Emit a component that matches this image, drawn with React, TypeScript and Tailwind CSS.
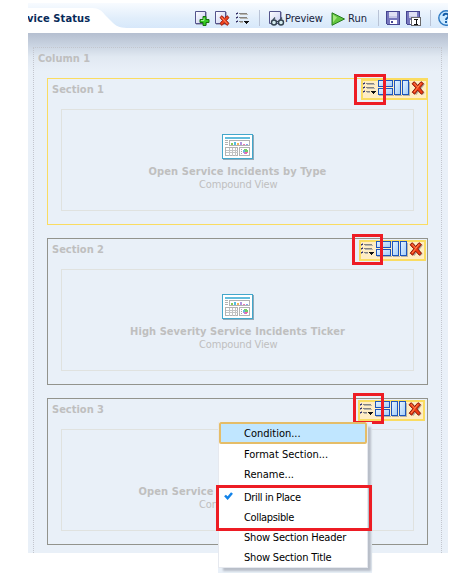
import React from "react";

const Separator = ({ className }: { className: string }) => (
  <span className={`h-4 w-px shrink-0 bg-[#b9c3d6] ${className}`} />
);

const Cross = ({ className }: { className?: string }) => (
  <svg viewBox="0 0 14 14" className={className}>
    <path d="M2.2 11.9 5.2 7.5 1.5 3 4 .9 7.2 4.5 10.8.8 13 2.6 9.5 7.3l3.3 4-2.4 2.2-3.2-3.7-2.7 3.4z" fill="#b5ad9c" transform="translate(.8 .7)" />
    <path d="M1.2 11.2 4.8 6.8 1 2.7 3.3.7 6.6 4.5 10 .7l2.5 1.9-3.7 4.3 3.7 4.4-2.2 1.9-3.6-4-3.1 4z" fill="#ee3b13" stroke="#8b1a0a" strokeWidth="1" />
    <path d="M3 2.2 6.6 6.2M10 2.3 3.2 11" stroke="#ff8b54" strokeWidth="1" fill="none" />
  </svg>
);

const ListIcon = ({ className }: { className?: string }) => (
  <svg viewBox="0 0 15 13" className={className} shapeRendering="crispEdges">
    <path d="M0 1h2v1H0zM0 5h2v1H0zM0 9h2v1H0z" fill="#32326e" />
    <path d="M1 0h1v1H1zM1 4h1v1H1zM1 8h1v1H1zM0 2h1v1H0zM0 6h1v1H0zM0 10h1v1H0z" fill="#9393ad" />
    <path d="M3 1h8v1H3zM3 5h8v1H3zM3 9h4v1H3z" fill="#858380" />
    <path d="M4 2h8v1H4zM4 6h8v1H4zM4 10h3v1H4z" fill="#b7b5ae" />
    <path d="M8 9h5v1H8zM9 10h3v1H9zM10 11h1v1h-1z" fill="#111" />
  </svg>
);

const Page = () => (
  <>
    <path d="M1.5 1.5h10v12h-10z" fill="url(#sheet)" stroke="#54548c" />
    <path d="M2 14.5h10.5V2" fill="none" stroke="#aab0c4" />
  </>
);

const AddIcon = () => (
  <svg viewBox="0 0 16 17" className="h-[17px] w-4 shrink-0">
    <defs>
      <linearGradient id="sheet" x2="1" y2="1"><stop stopColor="#fff" /><stop offset="1" stopColor="#c8cdf0" /></linearGradient>
    </defs>
    <Page />
    <path d="M9 6.5h3v3h3v3h-3v3H9v-3H6v-3h3z" fill="#35cb23" stroke="#16700f" />
    <path d="M10 8v2.5H7" stroke="#a4f395" fill="none" />
  </svg>
);

const DeleteIcon = () => (
  <svg viewBox="0 0 16 17" className="h-[17px] w-4 shrink-0">
    <Page />
    <path d="M6 7.5 8 5.7l2.5 2.7L13 5.7l2 1.8-2.6 3 2.6 3-2 1.9-2.5-2.7L8 15.4l-2-1.9 2.5-3z" fill="#ef4220" stroke="#9c1c0c" />
    <path d="m7.5 7.5 5.5 6" stroke="#ff9266" />
  </svg>
);

const PreviewIcon = () => (
  <svg viewBox="0 0 17 17" className="h-[17px] w-[17px] shrink-0">
    <path d="M1.5 1.5h11v12h-11z" fill="url(#sheet)" stroke="#54548c" />
    <path d="M13.5 2v10" stroke="#a7acc2" />
    <path d="m5 10 2-2.5M12 10l2-2.5" stroke="#465564" strokeWidth="1.3" />
    <circle cx="6" cy="12.5" r="2.5" fill="#d5edf0" stroke="#344350" strokeWidth="1.4" />
    <circle cx="13" cy="12.5" r="2.5" fill="#d5edf0" stroke="#344350" strokeWidth="1.4" />
    <path d="M8.5 11.5h2" stroke="#344350" />
  </svg>
);

const Disk = () => (
  <>
    <path d="M1 0h12l1 1v13H1l-1-1V0z" fill="#454591" />
    <path d="M1 1h12v12H1z" fill="#7777bd" />
    <path d="M3 1h8v6H3z" fill="#dfe0f4" />
    <path d="M3 5h8v2H3z" fill="#c5c7e8" />
    <path d="M4 9h7v4H4z" fill="#fff" />
    <path d="M5 10h2v2H5z" fill="#484895" />
  </>
);

const ViewIcon = () => (
  <svg viewBox="0 0 32 26" className="h-[26px] w-8 shrink-0" shapeRendering="crispEdges">
    <path d="M1 1h31v25H1z" fill="#93a9b7" />
    <path d="M0 0h31v25H0z" fill="#42a7cc" />
    <path d="M1 1h29v23H1z" fill="#fff" />
    <path d="M3 3h25v2H3z" fill="#63bddd" />
    <path d="M3 6h3v1H3zM3 8h3v1H3zM3 10h3v1H3z" fill="#b2b2b2" />
    <path d="M7.5 6.5h20v5h-20zM3.5 13.5h12v8h-12zM17.5 13.5h10v8h-10z" fill="#fff" stroke="#b2b2b2" />
    <path d="M4 16.5h12M4 18.5h12M7.5 14v8M10.5 14v8M13.5 14v8" stroke="#c4c4c4" />
    <path d="M19 15h1v1h-1zM19 17h1v1h-1zM19 19h1v1h-1z" fill="#aaa" />
    <path d="M9 9h2v2H9z" fill="#8acb54" />
    <path d="M12 8h2v3h-2z" fill="#54bee1" />
    <path d="M15 9h2v2h-2z" fill="#f2b65a" />
    <path d="M18 8h2v3h-2z" fill="#b096df" />
    <path d="M21 10h2v1h-2z" fill="#ed78b1" />
    <path d="M24 10h2v1h-2z" fill="#83a5ef" />
    <path d="M22 15h3v1h1v3h-1v1h-3v-1h-1v-3h1z" fill="#76cd65" />
    <path d="M21 16h2v2h-2z" fill="#63bddd" />
    <path d="M21 18h2v2h-1v-1h-1z" fill="#b08fe0" />
    <path d="M23 18h3v1h-1v1h-2z" fill="#ee6aa9" />
  </svg>
);

const PanesIcon = () => (
  <svg viewBox="0 0 32 17" className="h-[17px] w-8 shrink-0" shapeRendering="crispEdges">
    <defs>
      <linearGradient id="pane" x2="1" y2="1"><stop stopColor="#e6f4ff" /><stop offset="1" stopColor="#a2ccf8" /></linearGradient>
    </defs>
    <path d="M1 15h15v1H1zM17 15h7v1h-7zM25 15h7v1h-7zM31 2h1v14h-1z" fill="#b9b4a2" />
    <g fill="url(#pane)" stroke="#1d55bb">
      <path d="M.5.5h14v6H.5z" />
      <path d="M.5 8.5h14v6H.5z" />
      <path d="M16.5.5h6v14h-6z" />
      <path d="M24.5.5h6v14h-6z" />
    </g>
  </svg>
);

const SectionTools = ({ place, mark }: { place: string; mark: string }) => (
  <>
    <div className={`absolute z-10 flex h-[21px] w-[67px] border-2 border-[#fadc61] bg-[#ffedc4] ${place}`}>
      <ListIcon className="mt-px h-[13px] w-[15px] shrink-0" />
      <div className="-mt-px"><PanesIcon /></div>
      <Cross className="ml-px h-[14px] w-[14px] shrink-0" />
    </div>
    <div className={`absolute z-20 border-3 border-[#ed1c24] ${mark}`} />
  </>
);

type SectionProps = {
  title: string;
  name: string;
  nameClass: string;
  kind?: string;
  border: string;
  place: string;
  mark: string;
};

const Section = ({ title, name, nameClass, kind = "Compound View", border, place, mark }: SectionProps) => (
  <section className={`relative h-[147px] w-[381px] border ${border}`}>
    <h2 className="ml-1 h-[30px] pt-1 text-[11px] leading-[14px] font-bold">{title}</h2>
    <div className="ml-[13px] flex h-[102px] w-[353px] flex-col items-center border border-[#e0e2df] pt-[24px]">
      <ViewIcon />
      <div className={`mt-[5px] text-[11px] leading-[14px] font-bold ${nameClass}`}>{name}</div>
      <div className="w-[77px] text-[11px] leading-[12px] tracking-[-0.15px]">{kind}</div>
    </div>
    <SectionTools place={place} mark={mark} />
  </section>
);

const MenuItem = ({ children, className = "" }: { children: React.ReactNode; className?: string }) => (
  <div className={`flex h-5 items-center pt-[2px] pl-[25px] ${className}`}>{children}</div>
);

export default function App() {
  return (
    <main className="relative h-[579px] w-[466px] overflow-hidden bg-white pt-[3px] pl-7 font-['DejaVu_Sans_Condensed','DejaVu_Sans',sans-serif] [font-stretch:condensed] text-[11px] whitespace-nowrap">
      <div className="w-[420px] overflow-hidden">
        <header className="relative flex h-[30px] items-center bg-linear-to-b from-[#f8fbff] via-[#e1eefb] to-[#d2e5fa]">
          <svg viewBox="0 0 420 30" className="absolute inset-0 h-[30px] w-[420px]">
            <path d="M0 5h64c7 0 10 3 13 7l8 8c4 4 8 5 17 5h318v5H0z" fill="#fff" />
          </svg>
          <div className="relative flex h-[30px] w-[420px] items-center">
            <h1 className="-ml-px w-[167px] shrink-0 pt-[3px] text-[11px] font-bold tracking-[0.1px] text-[#082a59]">vice Status</h1>
            <AddIcon />
            <span className="w-1 shrink-0" />
            <DeleteIcon />
            <ListIcon className="ml-[6px] mt-px h-[13px] w-[15px] shrink-0" />
            <Separator className="ml-[8px]" />
            <span className="w-2 shrink-0" />
            <PreviewIcon />
            <span className="w-[38px] shrink-0 pt-[3px] tracking-[-0.1px] text-[#17233c]">Preview</span>
            <svg viewBox="0 0 15 14" className="ml-[8px] mt-px h-[14px] w-[15px] shrink-0">
              <path d="m1 .8 12.5 6.2L1 13.3z" fill="#63c63f" stroke="#287b22" />
              <path d="M2 2.5v8l4-5" fill="#a5e77f" />
            </svg>
            <span className="ml-[2px] w-[20px] shrink-0 pt-[3px] text-[#17233c]">Run</span>
            <Separator className="ml-[10px]" />
            <svg viewBox="0 0 14 14" className="ml-[7px] h-[14px] w-[14px] shrink-0" shapeRendering="crispEdges"><Disk /></svg>
            <svg viewBox="0 0 16 16" className="ml-[6px] mt-px h-4 w-4 shrink-0" shapeRendering="crispEdges">
              <Disk />
              <path d="M5.5 6.5h9v8h-9z" fill="#fff" stroke="#696969" />
              <path d="M8 8h4v1h-1.5v4H12v1H8v-1h1.5V9H8z" fill="#111" />
            </svg>
            <Separator className="ml-[8px]" />
            <svg viewBox="0 0 16 16" className="ml-[7px] h-4 w-4 shrink-0">
              <circle cx="8" cy="8" r="7.2" fill="#cae8ff" stroke="#2c78c1" strokeWidth="1.4" />
              <path d="M5.5 6c0-3 5-3 5 0 0 2-2.5 1.5-2.5 4M8 11v2" fill="none" stroke="#125ba6" strokeWidth="1.9" />
            </svg>
          </div>
        </header>
        <div className="h-[520px] bg-[#e9f0f8] bg-[linear-gradient(to_bottom,#b5bfd0_0px,#c9d3e1_12px,#e1e9f2_24px,#e9f0f8_38px)] pt-[14px] pl-[5px] text-[#bfbfbf]">
          <div className="h-[506px] w-[409px] border border-b-0 border-dotted border-[#c3c6ce] pl-[13px]">
            <h2 className="-ml-[9px] h-[30px] pt-1 text-[11px] leading-[14px] font-bold">Column 1</h2>
            <div className="flex flex-col gap-[13px]">
              <Section title="Section 1" name="Open Service Incidents by Type" nameClass="tracking-[0.1px]" border="border-[#fadc61]" place="top-0 right-[-1px]" mark="top-[-5px] left-[306px] h-[31px] w-8" />
              <Section title="Section 2" name="High Severity Service Incidents Ticker" nameClass="tracking-[0.06px]" border="border-[#92938c]" place="top-px right-px" mark="top-[-5px] left-[304px] h-[31px] w-[31px]" />
              <Section title="Section 3" name="Open Service" nameClass="w-[198px] tracking-[0.1px]" kind="Con" border="border-[#92938c]" place="top-px right-[2px]" mark="top-[-6px] left-[305px] h-[31px] w-[31px]" />
            </div>
          </div>
        </div>
      </div>
      <div className="absolute top-[422px] left-[218px] z-30 h-[151px] w-[154px] bg-[#e9f0f8]">
        <div className="h-[146px] w-[150px] border border-t-0 border-[#e6e9ef] bg-white text-black shadow-[4px_4px_2px_-1px_#b8bec8]">
          <div className="flex h-[22px] items-center rounded-[2px] border-2 border-[#e5bd68] bg-[#c0e6ff] pt-[3px] pl-[23px]">Condition...</div>
          <MenuItem>Format Section...</MenuItem>
          <MenuItem>Rename...</MenuItem>
          <MenuItem className="relative mt-[3px]">
            <svg viewBox="0 0 9 8" className="absolute top-[5px] left-[5px] h-2 w-[9px]"><path d="m1 3.5 2.6 2.7L8 1" fill="none" stroke="#1283e9" strokeWidth="2.5" /></svg>
            <span className="tracking-[-0.35px]">Drill in Place</span>
          </MenuItem>
          <MenuItem className="tracking-[-0.35px]">Collapsible</MenuItem>
          <MenuItem className="tracking-[-0.2px]">Show Section Header</MenuItem>
          <MenuItem className="tracking-[-0.2px]">Show Section Title</MenuItem>
        </div>
        <div className="absolute top-[63px] left-[-2px] h-[46px] w-[156px] border-3 border-[#ed1c24]" />
      </div>
    </main>
  );
}
